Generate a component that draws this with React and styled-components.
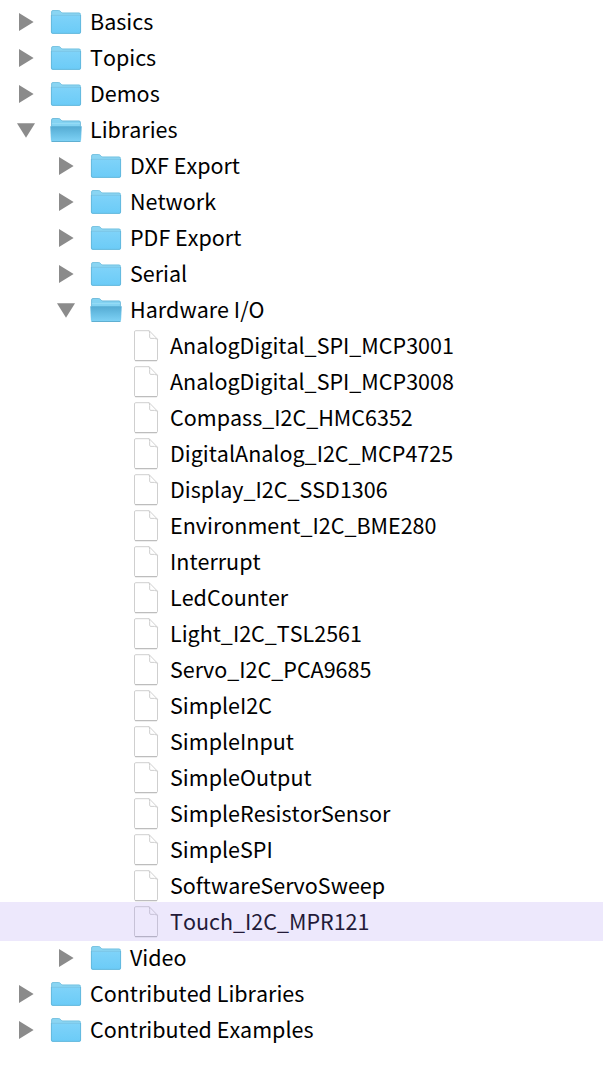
import React from "react";
import styled, { createGlobalStyle } from "styled-components";

const GlobalStyle = createGlobalStyle`
  body { margin: 0; background: #fff; }
`;

const Tree = styled.ul`
  list-style: none;
  margin: 0;
  padding: 4px 0 0;
  min-height: 1074px;
  box-sizing: border-box;
  font-family: "Noto Sans CJK SC", "Open Sans", sans-serif;
  font-size: 21.5px;
  font-kerning: none;
  color: #000;
`;

const Row = styled.li`
  display: flex;
  align-items: center;
  height: 36px;
  padding-left: ${(p) => 16 + p.$depth * 40}px;
  ${(p) =>
    p.$selected &&
    `
    height: 39px;
    margin: -2px 1px -1px 0;
    background: #ede8fc;
    color: #231a38;
  `}
`;

const Toggle = styled.span`
  display: flex;
  flex: none;
  width: 20px;
  height: 36px;
  margin-right: 14px;
`;

const Icon = styled.span`
  display: flex;
  flex: none;
  width: 32px;
  height: 36px;
  margin-right: 8px;
`;

const Label = styled.span`
  line-height: 34px;
  height: 36px;
  white-space: nowrap;
`;

function Triangle({ open }) {
  return (
    <svg width="20" height="36">
      <path d={open ? "M1 11.2H19L10 25.8Z" : "M3 9L17.6 18L3 27Z"} fill="#8b8b8b" />
    </svg>
  );
}

function ClosedFolder() {
  return (
    <svg width="32" height="36">
      <path d="M1.3 11V8Q1.3 6.3 3 6.3H8.4Q9.5 6.3 10.3 7.1L11.4 8.2Q12 8.8 13 8.8H29Q30.7 8.8 30.7 10.3V14H1.3Z" fill="#8ad5f3" />
      <path d="M1.6 11V8Q1.6 6.5 3 6.5H8.4Q9.5 6.5 10.3 7.3L11.4 8.4Q12 9 13 9H29Q30.5 9 30.5 10.5" fill="none" stroke="#70bcdc" strokeWidth=".8" />
      <path d="M1 11H31V28Q31 29.7 29.4 29.7H2.6Q1 29.7 1 28Z" fill="url(#front)" />
      <path d="M1.5 11.3H30.5" stroke="#7cc6e6" />
      <path d="M1.4 11V28Q1.5 29.4 3 29.4H29Q30.5 29.4 30.6 28V11" fill="none" stroke="#5fb2d6" strokeWidth=".8" />
    </svg>
  );
}

function OpenFolder() {
  return (
    <svg width="32" height="36">
      <path d="M1.3 17V8Q1.3 6.3 3 6.3H8.4Q9.5 6.3 10.3 7.1L11.4 8.2Q12 8.8 13 8.8H29Q30.7 8.8 30.7 10.3V17Z" fill="#84d3f2" />
      <path d="M1.6 14V8Q1.6 6.5 3 6.5H8.4Q9.5 6.5 10.3 7.3L11.4 8.4Q12 9 13 9H29Q30.4 9 30.4 10.5V14" fill="none" stroke="#6ab5d6" strokeWidth=".8" />
      <path d="M2 11.6H30" stroke="#98dcf7" />
      <path d="M0.3 14.3H31.7L31.1 28Q31 29.7 29.4 29.7H2.6Q1 29.7 .9 28Z" fill="url(#openFront)" />
      <path d="M1.5 29.5H30.5" stroke="#58a9cc" strokeWidth=".9" />
    </svg>
  );
}

function FileIcon({ selected }) {
  const line = selected ? "#c3bdd2" : "#c9c9c9";
  return (
    <svg width="32" height="36">
      <path d="M5.8 2.7H19.2L27.5 11.2V31.2Q27.5 32.6 26.2 32.6H5.8Q4.5 32.6 4.5 31.2V4Q4.5 2.7 5.8 2.7Z" fill={selected ? "#ede8fc" : "#fff"} stroke={line} strokeWidth=".9" />
      <path d="M19.2 2.7Q20 5 19.6 9.2Q19.7 10.4 21 10.4Q25 10 27.5 11.2" fill="none" stroke={line} strokeWidth=".9" />
      <path d="M5 32.7H27" stroke={selected ? "#aaa5ba" : "#b0b0b0"} strokeWidth=".8" />
    </svg>
  );
}

function Gradients() {
  return (
    <defs>
      <linearGradient id="front" x1="0" y1="0" x2="0" y2="1">
        <stop offset="0" stopColor="#7fd3f9" />
        <stop offset="1" stopColor="#6bcbf7" />
      </linearGradient>
      <linearGradient id="openFront" x1="0" y1="0" x2="0" y2="1">
        <stop offset="0" stopColor="#55abd2" />
        <stop offset=".5" stopColor="#69bfe5" />
        <stop offset="1" stopColor="#80d3f6" />
      </linearGradient>
    </defs>
  );
}

const PaintServer = styled.svg`
  position: absolute;
  width: 0;
  height: 0;
`;

const folder = (depth, name, open = false) => ({ kind: "folder", depth, name, open });
const file = (name, selected = false) => ({ kind: "file", depth: 2, name, selected });

const items = [
  folder(0, "Basics"),
  folder(0, "Topics"),
  folder(0, "Demos"),
  folder(0, "Libraries", true),
  folder(1, "DXF Export"),
  folder(1, "Network"),
  folder(1, "PDF Export"),
  folder(1, "Serial"),
  folder(1, "Hardware I/O", true),
  file("AnalogDigital_SPI_MCP3001"),
  file("AnalogDigital_SPI_MCP3008"),
  file("Compass_I2C_HMC6352"),
  file("DigitalAnalog_I2C_MCP4725"),
  file("Display_I2C_SSD1306"),
  file("Environment_I2C_BME280"),
  file("Interrupt"),
  file("LedCounter"),
  file("Light_I2C_TSL2561"),
  file("Servo_I2C_PCA9685"),
  file("SimpleI2C"),
  file("SimpleInput"),
  file("SimpleOutput"),
  file("SimpleResistorSensor"),
  file("SimpleSPI"),
  file("SoftwareServoSweep"),
  file("Touch_I2C_MPR121", true),
  folder(1, "Video"),
  folder(0, "Contributed Libraries"),
  folder(0, "Contributed Examples"),
];

export default function App() {
  return (
    <>
      <GlobalStyle />
      <PaintServer><Gradients /></PaintServer>
      <Tree>
        {items.map((item) => (
          <Row key={item.name} $depth={item.depth} $selected={item.selected}>
            <Toggle>{item.kind === "folder" && <Triangle open={item.open} />}</Toggle>
            <Icon>
              {item.kind === "file" ? (
                <FileIcon selected={item.selected} />
              ) : item.open ? (
                <OpenFolder />
              ) : (
                <ClosedFolder />
              )}
            </Icon>
            <Label>{item.name}</Label>
          </Row>
        ))}
      </Tree>
    </>
  );
}
